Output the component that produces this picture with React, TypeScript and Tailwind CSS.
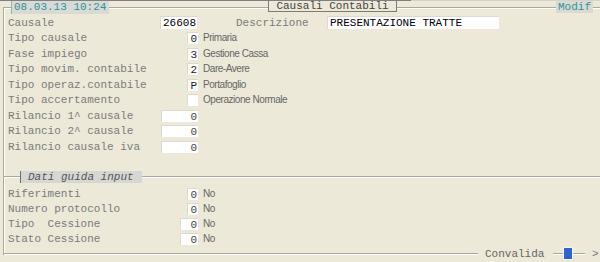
import React from "react";

const mono = "font-['Liberation_Mono',monospace]";
const sans = "font-['Liberation_Sans',Arial,sans-serif]";

function HLine({ className = "" }: { className?: string }) {
  return (
    <div className={"h-[2px] border-t border-t-[#aca899] border-b border-b-white " + className} />
  );
}

function Box({ w, value, color = "text-[#222]" }: { w: string; value?: string; color?: string }) {
  return (
    <div
      className={
        "h-[12px] bg-white border-t border-l border-[#dcdad0] text-right pr-[1px] text-[11px] leading-[12px] " +
        mono +
        " " +
        w +
        " " +
        color
      }
    >
      {value}
    </div>
  );
}

function Row({
  label,
  box,
  value,
  desc,
  h = "h-[15.5px]",
  color,
}: {
  label: string;
  box: string;
  value?: string;
  desc?: string;
  h?: string;
  color?: string;
}) {
  return (
    <div className={"flex items-center " + h}>
      <div className={"w-[156px] pl-[4px] text-[11px] leading-[12px] text-[#7b7b7b] whitespace-pre " + mono}>
        {label}
      </div>
      <div className="w-[38px] flex justify-end">
        <Box w={box} value={value} color={color} />
      </div>
      {desc && (
        <div className={"ml-[5px] text-[10px] tracking-[-0.45px] leading-[12px] text-[#666] " + sans}>{desc}</div>
      )}
    </div>
  );
}

export default function App() {
  return (
    <div className="w-[600px] h-[262px] bg-[#ECE9D8] overflow-hidden">
      {/* top line */}
      <div className="flex h-px">
        <div className="w-[411px] bg-[#808080]" />
        <div className="flex-1 bg-[#d6d4ca]" />
      </div>
      {/* header */}
      <div className="flex h-[13px] items-start">
        <div className="w-[3px]" />
        <div className="w-[8px] mt-[6px] h-[7px] border-t border-l border-[#aca899] shadow-[inset_1px_1px_0_#fff]" />
        <div
          className={
            "w-[98px] h-[13px] bg-[#d9d9d6] border-l border-[#8fb5b5] pl-[2px] text-[11px] leading-[13px] text-[#2f9595] " +
            mono
          }
        >
          08.03.13 10:24
        </div>
        <HLine className="flex-1 mt-[6px]" />
        <div
          className={
            "w-[129px] h-[12px] -mt-px border-l border-r border-b border-[#7a7a7a] text-center text-[11px] leading-[13px] text-[#444] " +
            mono
          }
        >
          Causali Contabili
        </div>
        <HLine className="flex-1 mt-[6px]" />
        <div
          className={
            "w-[37px] h-[12px] bg-[#d9d9d6] text-center text-[11px] leading-[12px] text-[#2f9595] " + mono
          }
        >
          Modif
        </div>
        <HLine className="w-[7px] mt-[6px]" />
      </div>

      {/* panel */}
      <div className="ml-[3px] h-[241px] border-l border-[#aca899] shadow-[inset_1px_0_0_#fff] flex flex-col pt-[1px]">
        {/* causale row */}
        <div className="flex items-center h-[15.5px]">
          <div className={"w-[156px] pl-[4px] text-[11px] leading-[12px] text-[#7b7b7b] " + mono}>Causale</div>
          <div className="w-[38px] flex justify-start">
            <Box w="w-[37px] h-[13px]" value="26608" color="text-black" />
          </div>
          <div className={"ml-[38px] w-[91px] text-[11px] leading-[12px] text-[#7b7b7b] " + mono}>Descrizione</div>
          <div
            className={
              "w-[172px] h-[13px] bg-white border-t border-l border-[#dcdad0] pl-[2px] text-[11px] leading-[13px] text-black " +
              mono
            }
          >
            PRESENTAZIONE TRATTE
          </div>
        </div>
        <Row label="Tipo causale" box="w-[11px]" value="0" desc="Primaria" />
        <Row label="Fase impiego" box="w-[11px]" value="3" desc="Gestione Cassa" />
        <Row label="Tipo movim. contabile" box="w-[11px]" value="2" desc="Dare-Avere" />
        <Row label="Tipo operaz.contabile" box="w-[11px]" value="P" desc="Portafoglio" />
        <Row label="Tipo accertamento" box="w-[11px]" value="" desc="Operazione Normale" />
        <Row label="Rilancio 1^ causale" box="w-[37px]" value="0" color="text-[#444]" />
        <Row label="Rilancio 2^ causale" box="w-[37px]" value="0" color="text-[#444]" />
        <Row label="Rilancio causale iva" box="w-[37px]" value="0" color="text-[#444]" />

        {/* tab */}
        <div className="mt-[16.5px] flex items-center h-[12px]">
          <HLine className="w-[16px] mt-[1px]" />
          <div
            className={
              "w-[122px] h-[12px] bg-[#d6d6d3] border-l border-[#6f6f6f] pl-[7px] italic text-[11px] leading-[12px] text-[#555] " +
              mono
            }
          >
            Dati guida input
          </div>
          <HLine className="flex-1 mt-[1px]" />
        </div>

        <div className="mt-[3px]" />
        <Row label="Riferimenti" box="w-[11px]" value="0" desc="No" h="h-[15.3px]" color="text-[#444]" />
        <Row label="Numero protocollo" box="w-[11px]" value="0" desc="No" h="h-[15.3px]" color="text-[#444]" />
        <Row label="Tipo  Cessione" box="w-[18px]" value="0" desc="No" h="h-[15.3px]" color="text-[#444]" />
        <Row label="Stato Cessione" box="w-[18px]" value="0" desc="No" h="h-[15.3px]" color="text-[#444]" />

        {/* bottom bar */}
        <div className="mt-auto flex items-center h-[13px] -mb-[5px]">
          <HLine className="flex-1 mt-[1px]" />
          <div className={"ml-[7px] w-[60px] text-[11px] leading-[12px] text-[#666] " + mono}>Convalida</div>
          <HLine className="ml-[8px] w-[10px] mt-[1px]" />
          <div className="w-[10px] h-[13px] border border-[#f6f4ec] bg-[#3163cd]" />
          <HLine className="w-[12px] mt-[1px]" />
          <div className={"ml-[7px] w-[8px] text-[11px] leading-[12px] text-[#777] " + mono}>&gt;</div>
        </div>
      </div>
    </div>
  );
}
